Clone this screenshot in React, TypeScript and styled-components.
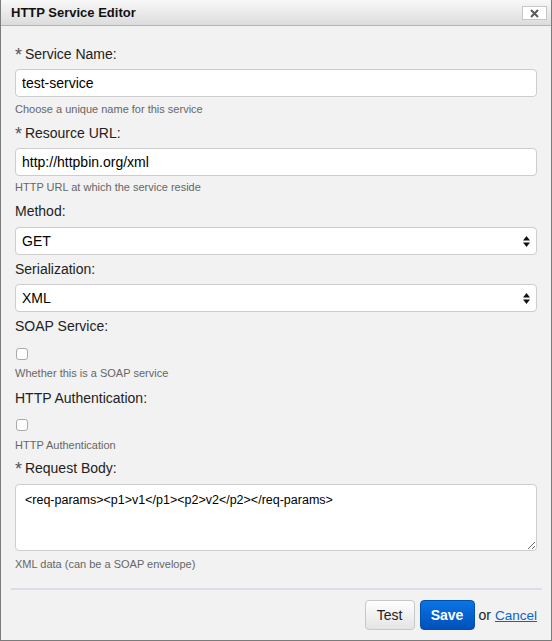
import React from "react";
import styled, { createGlobalStyle } from "styled-components";

const Global = createGlobalStyle`
  html, body { margin: 0; padding: 0; background: #f2f2f2; }
  body { font-family: "Liberation Sans", Arial, Helvetica, sans-serif; }
  * { box-sizing: border-box; }
`;

const Dialog = styled.div`
  width: 552px;
  height: 641px;
  background: #f2f2f2;
  border: 1px solid #7b7b7b;
  border-top: none;
  display: flex;
  flex-direction: column;
`;

const Header = styled.div`
  height: 26px;
  flex: none;
  display: flex;
  align-items: center;
  justify-content: space-between;
  padding: 0 4px 0 10px;
  background: linear-gradient(#f8f8f8, #dcdcdc);
  border-bottom: 1px solid #b4b4b4;
`;

const Title = styled.div`
  font-size: 13px;
  font-weight: bold;
  color: #111;
  margin-top: -1px;
`;

const CloseBtn = styled.button`
  width: 25px;
  height: 14px;
  margin-top: 1px;
  padding: 0;
  border: 1px solid #c6c6c6;
  background: #fff;
  display: flex;
  align-items: center;
  justify-content: center;
`;

const Body = styled.div`
  padding: 18px 14px 0 14px;
  display: flex;
  flex-direction: column;
`;

const Field = styled.div<{ $mb: number }>`
  display: flex;
  flex-direction: column;
  margin-bottom: ${(p) => p.$mb}px;
`;

const Label = styled.label<{ $mb?: number }>`
  font-size: 14px;
  line-height: 20px;
  height: 20px;
  color: #222;
  margin-bottom: ${(p) => (p.$mb ?? 5)}px;
`;

const Star = styled.span`
  font-size: 18px;
  line-height: 0;
  color: #555;
  position: relative;
  top: 2px;
  margin-right: -1px;
`;

const TextInput = styled.input`
  height: 28px;
  width: 100%;
  border: 1px solid #cdcdcd;
  border-radius: 4px;
  background: #fff;
  padding: 0 6px;
  font-family: "Liberation Sans", Arial, sans-serif;
  font-size: 14px;
  color: #000;
  outline: none;
`;

const SelectWrap = styled.div`
  position: relative;
  height: 28px;
`;

const Select = styled.select`
  appearance: none;
  -webkit-appearance: none;
  height: 28px;
  width: 100%;
  border: 1px solid #cdcdcd;
  border-radius: 4px;
  background: #fff;
  padding: 0 6px;
  font-family: "Liberation Sans", Arial, sans-serif;
  font-size: 14px;
  color: #000;
  outline: none;
`;

const Arrows = styled.svg`
  position: absolute;
  right: 7px;
  top: 9px;
  pointer-events: none;
`;

const Check = styled.input<{ $mt: number }>`
  appearance: none;
  -webkit-appearance: none;
  width: 12px;
  height: 12px;
  margin: ${(p) => p.$mt}px 0 0 1px;
  border: 1px solid #a9a9a9;
  border-radius: 3px;
  background: #fff;
`;

const TextArea = styled.textarea`
  height: 67px;
  width: 100%;
  border: 1px solid #cdcdcd;
  border-radius: 4px;
  background: #fff;
  padding: 6px 9px;
  font-family: "Liberation Sans", Arial, sans-serif;
  font-size: 12.5px;
  line-height: 18px;
  color: #000;
  outline: none;
`;

const Help = styled.div<{ $mt?: number }>`
  font-size: 11px;
  line-height: 16px;
  color: #666;
  margin-top: ${(p) => (p.$mt ?? 4)}px;
`;

const Separator = styled.hr`
  margin: 16px 9px 0 10px;
  border: none;
  height: 2px;
  background: #dddde9;
`;

const Footer = styled.div`
  display: flex;
  justify-content: flex-end;
  align-items: center;
  padding: 10px 14px 0 0;
  font-size: 13px;
  color: #222;
`;

const Button = styled.button<{ $primary?: boolean }>`
  height: 30px;
  width: ${(p) => (p.$primary ? 55 : 50)}px;
  padding: 0;
  margin-right: ${(p) => (p.$primary ? 4 : 5)}px;
  border-radius: 4px;
  font-family: "Liberation Sans", Arial, sans-serif;
  font-size: 14px;
  font-weight: ${(p) => (p.$primary ? "bold" : "normal")};
  color: ${(p) => (p.$primary ? "#fff" : "#222")};
  border: 1px solid ${(p) => (p.$primary ? "#0050b0" : "#c8c8c8")};
  background: ${(p) =>
    p.$primary
      ? "linear-gradient(#0c74e4, #0050bb)"
      : "linear-gradient(#fefefe, #e4e4e4)"};
`;

const Or = styled.span`
  margin-right: 4px;
  font-size: 14px;
`;

const CancelLink = styled.a`
  color: #0a64c8;
  text-decoration: underline;
  font-size: 13.5px;
`;

const SelectArrows = () => (
  <Arrows width="7" height="11" viewBox="0 0 7 11">
    <path d="M3.5 0 L7 4.5 L0 4.5 Z" fill="#111" />
    <path d="M3.5 11 L7 6.5 L0 6.5 Z" fill="#111" />
  </Arrows>
);

export default function App() {
  return (
    <>
      <Global />
      <Dialog>
        <Header>
          <Title>HTTP Service Editor</Title>
          <CloseBtn aria-label="close">
            <svg width="9" height="9" viewBox="0 0 9 9">
              <path d="M1 1 L8 8 M8 1 L1 8" stroke="#5a5a5a" strokeWidth="2" />
            </svg>
          </CloseBtn>
        </Header>
        <Body>
          <Field $mb={6}>
            <Label><Star>*</Star> Service Name:</Label>
            <TextInput defaultValue="test-service" />
            <Help>Choose a unique name for this service</Help>
          </Field>
          <Field $mb={6}>
            <Label><Star>*</Star> Resource URL:</Label>
            <TextInput defaultValue="http://httpbin.org/xml" />
            <Help $mt={3}>HTTP URL at which the service reside</Help>
          </Field>
          <Field $mb={4}>
            <Label $mb={6}>Method:</Label>
            <SelectWrap>
              <Select defaultValue="GET">
                <option>GET</option>
                <option>POST</option>
              </Select>
              <SelectArrows />
            </SelectWrap>
          </Field>
          <Field $mb={4}>
            <Label>Serialization:</Label>
            <SelectWrap>
              <Select defaultValue="XML">
                <option>XML</option>
                <option>JSON</option>
              </Select>
              <SelectArrows />
            </SelectWrap>
          </Field>
          <Field $mb={7}>
            <Label $mb={0}>SOAP Service:</Label>
            <Check type="checkbox" $mt={12} />
            <Help $mt={5}>Whether this is a SOAP service</Help>
          </Field>
          <Field $mb={5}>
            <Label $mb={0}>HTTP Authentication:</Label>
            <Check type="checkbox" $mt={11} />
            <Help $mt={6}>HTTP Authentication</Help>
          </Field>
          <Field $mb={0}>
            <Label $mb={6}><Star>*</Star> Request Body:</Label>
            <TextArea defaultValue="<req-params><p1>v1</p1><p2>v2</p2></req-params>" />
            <Help $mt={5}>XML data (can be a SOAP envelope)</Help>
          </Field>
        </Body>
        <Separator />
        <Footer>
          <Button>Test</Button>
          <Button $primary>Save</Button>
          <Or>or</Or>
          <CancelLink href="#">Cancel</CancelLink>
        </Footer>
      </Dialog>
    </>
  );
}
